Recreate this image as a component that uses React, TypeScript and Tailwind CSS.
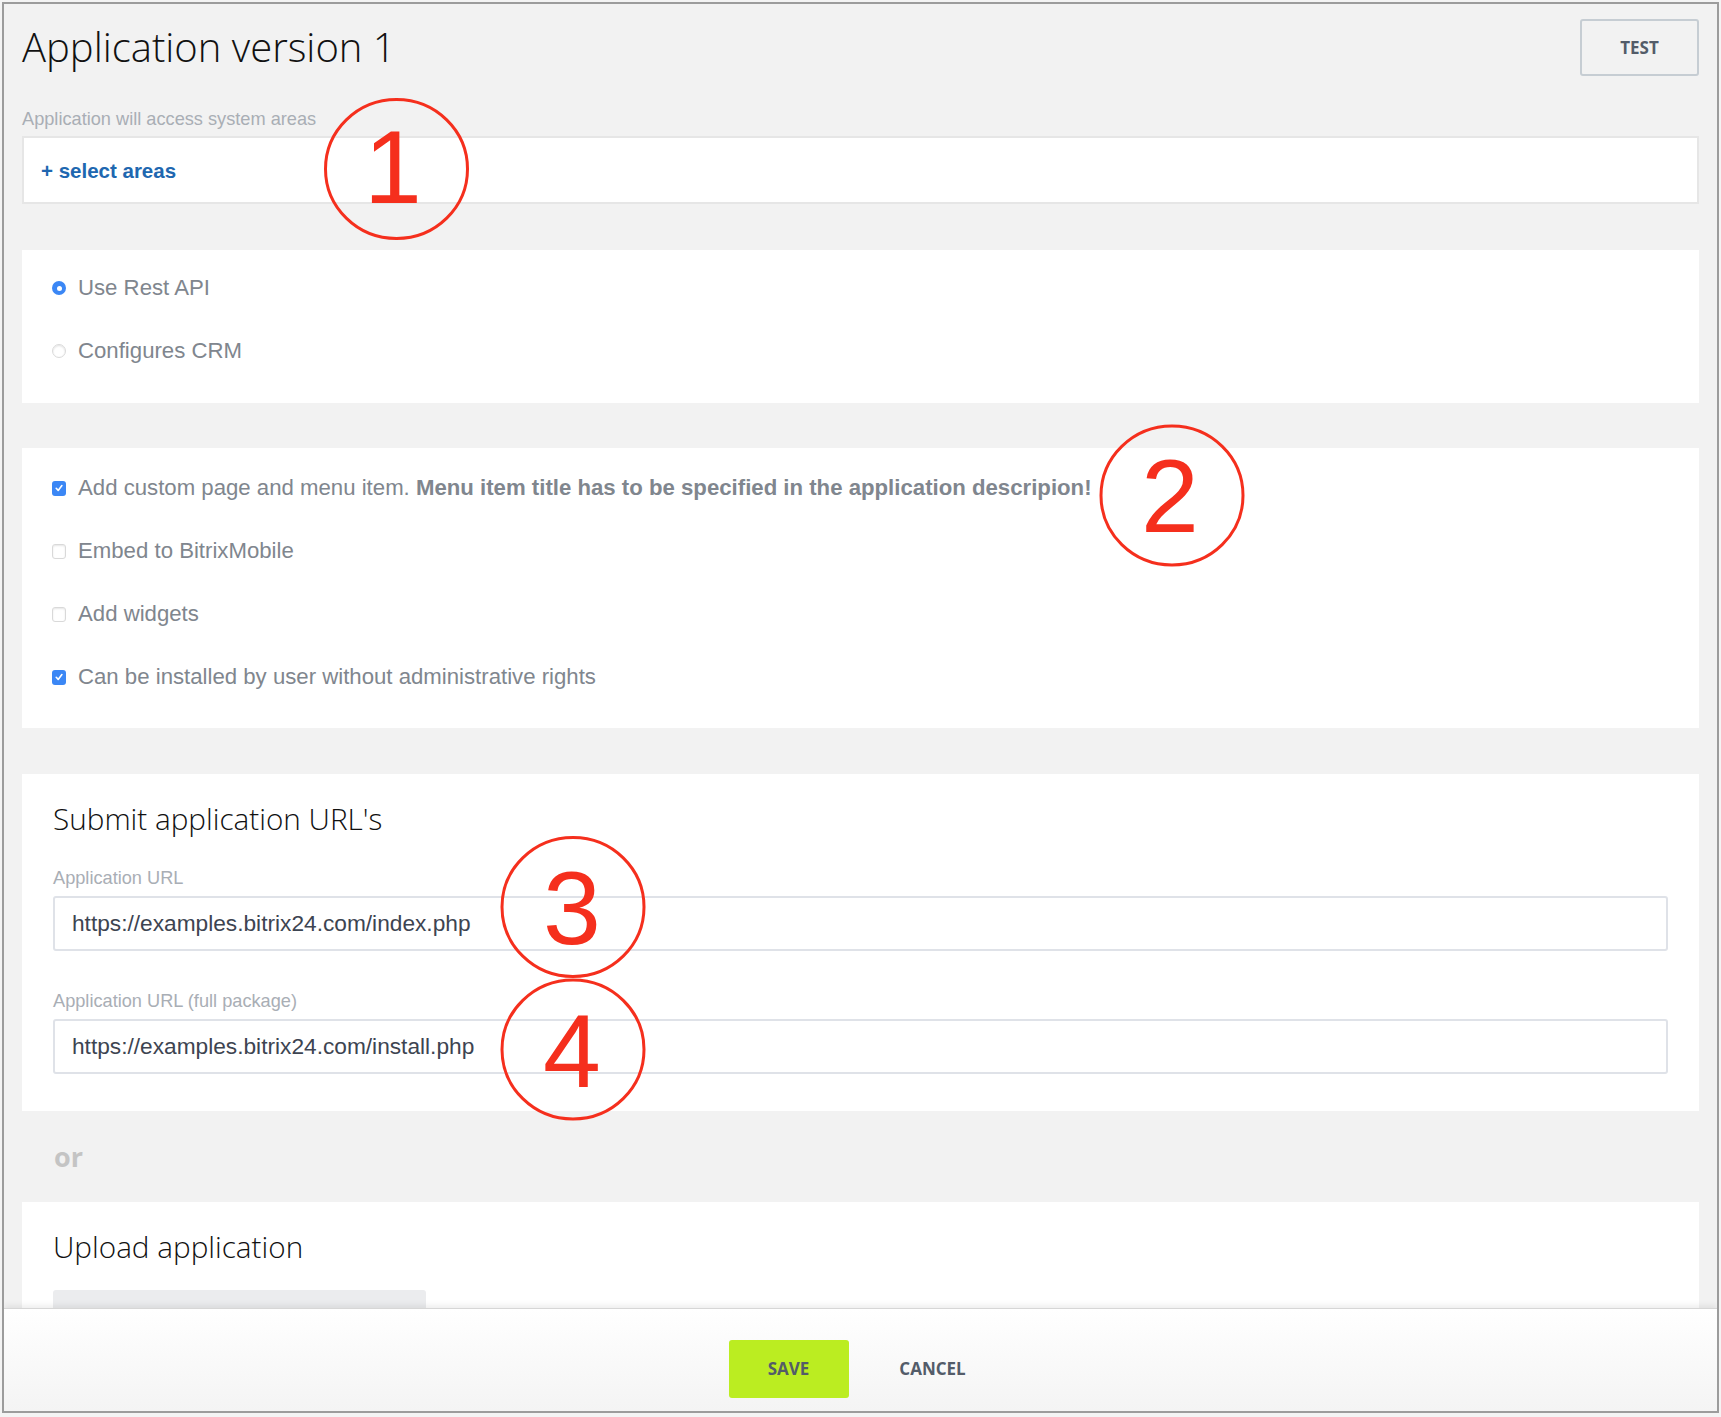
import React from "react";

function Radio({ checked }: { checked?: boolean }) {
  if (checked) {
    return (
      <span className="w-[14px] h-[14px] rounded-full bg-[#3b87f5] flex items-center justify-center shrink-0">
        <span className="w-[5px] h-[5px] rounded-full bg-white" />
      </span>
    );
  }
  return (
    <span className="w-[14px] h-[14px] rounded-full border border-[#dadada] bg-white shadow-[inset_0_1px_2px_rgba(0,0,0,0.12)] shrink-0" />
  );
}

function Check({ checked }: { checked?: boolean }) {
  if (checked) {
    return (
      <span className="w-[14px] h-[15px] rounded-[3px] bg-[#3b87f5] flex items-center justify-center shrink-0">
        <svg width="10" height="10" viewBox="0 0 10 10">
          <path d="M2.2 5.3 L4.2 7.4 L7.9 2.6" stroke="white" strokeWidth="1.6" fill="none" strokeLinecap="round" strokeLinejoin="round" />
        </svg>
      </span>
    );
  }
  return (
    <span className="w-[14px] h-[15px] rounded-[3px] border border-[#d9d9d9] bg-white shadow-[inset_0_1px_2px_rgba(0,0,0,0.1)] shrink-0" />
  );
}

function Row({ children, control }: { children: React.ReactNode; control: React.ReactNode }) {
  return (
    <div className="h-[40px] flex items-center gap-[12px]">
      {control}
      <span className="text-[22.2px] text-[#80868e] font-['Liberation_Sans',Arial,sans-serif] whitespace-nowrap">{children}</span>
    </div>
  );
}

export default function App() {
  const label = "text-[18.2px] leading-[20px] h-[20px] text-[#a9aeb5] font-['Liberation_Sans',Arial,sans-serif] whitespace-nowrap";
  const input =
    "h-[55px] border-2 border-[#dfe2e8] rounded-[3px] bg-white flex items-center pl-[17px] text-[22.7px] text-[#3d4451] font-['Liberation_Sans',Arial,sans-serif]";
  const heading = "h-[40px] text-[29.7px] leading-[40px] font-light text-[#111] font-['Open_Sans',sans-serif] whitespace-nowrap";
  return (
    <div className="w-[1721px] h-[1417px] bg-[#f4f4f4] pt-[2px] px-[2px] pb-[4px] relative">
      <div className="h-full border-2 border-[#9c9c9c] bg-[#f2f2f2] flex flex-col overflow-hidden">
        <div className="flex-1 overflow-hidden px-[18px] min-h-0">
          {/* header */}
          <div className="pt-[15px] flex justify-between items-center">
            <h1 className="text-[40px] font-light text-[#111] font-['Open_Sans',sans-serif] leading-[57px] whitespace-nowrap -mt-[2px]">
              Application version 1
            </h1>
            <button className="w-[119px] h-[57px] border-2 border-[#c6cdd3] rounded-[3px] text-[17px] font-bold text-[#535c69] font-['Open_Sans',sans-serif]">
              TEST
            </button>
          </div>

          <div className={"mt-[33px] " + label}>Application will access system areas</div>
          <div className="mt-[7px] h-[68px] border-2 border-[#e6e6e6] bg-white flex items-center pl-[17px]">
            <span className="text-[20.5px] font-bold text-[#2067b0] font-['Liberation_Sans',Arial,sans-serif] mt-[2px]">+ select areas</span>
          </div>

          {/* radio panel */}
          <div className="mt-[46px] bg-white pt-[18px] pb-[32px] pl-[30px] flex flex-col gap-[23px]">
            <Row control={<Radio checked />}>Use Rest API</Row>
            <Row control={<Radio />}>Configures CRM</Row>
          </div>

          {/* checkbox panel */}
          <div className="mt-[45px] bg-white pt-[20px] pb-[31px] pl-[30px] flex flex-col gap-[23px]">
            <Row control={<Check checked />}>
              Add custom page and menu item.{" "}
              <b className="font-bold">Menu item title has to be specified in the application descripion!</b>
            </Row>
            <Row control={<Check />}>Embed to BitrixMobile</Row>
            <Row control={<Check />}>Add widgets</Row>
            <Row control={<Check checked />}>Can be installed by user without administrative rights</Row>
          </div>

          {/* URL panel */}
          <div className="mt-[46px] bg-white px-[31px] pt-[25px] pb-[37px] flex flex-col">
            <div className={heading}>Submit application URL's</div>
            <div className={"mt-[29px] " + label}>Application URL</div>
            <div className={"mt-[8px] " + input}>https://examples.bitrix24.com/index.php</div>
            <div className={"mt-[40px] " + label}>Application URL (full package)</div>
            <div className={"mt-[8px] " + input}>https://examples.bitrix24.com/install.php</div>
          </div>

          <div className="h-[91px] flex items-center pl-[32px]">
            <span className="text-[27px] font-bold text-[#c4c4c4] font-['Open_Sans',sans-serif] mt-[2px]">or</span>
          </div>

          {/* upload panel */}
          <div className="bg-white px-[31px] pt-[25px] pb-[40px] flex flex-col">
            <div className={heading}>Upload application</div>
            <div className="mt-[23px] w-[373px] h-[40px] bg-[#ebecee] rounded-[3px]" />
          </div>
        </div>

        {/* footer */}
        <div className="h-[103px] shrink-0 border-t border-[#d6d6d6] bg-gradient-to-b from-white to-[#f4f4f4] shadow-[0_-3px_6px_rgba(0,0,0,0.07)] flex justify-center items-start pt-[31px] relative">
          <button className="w-[120px] h-[58px] rounded-[3px] bg-[#bbed21] text-[17px] font-bold text-[#535c69] font-['Open_Sans',sans-serif]">
            SAVE
          </button>
          <button className="ml-[24px] w-[120px] h-[58px] text-[17px] font-bold text-[#535c69] font-['Open_Sans',sans-serif]">
            CANCEL
          </button>
        </div>
      </div>

      {/* annotation overlay */}
      <svg className="absolute left-0 top-0 pointer-events-none" width="1721" height="1417" viewBox="0 0 1721 1417">
        <g fill="none" stroke="#f52f1d" strokeWidth="3">
          <ellipse cx="396.5" cy="169" rx="71" ry="69.5" />
          <ellipse cx="1172" cy="495.5" rx="71" ry="69.5" />
          <ellipse cx="573" cy="907" rx="71" ry="69.5" />
          <ellipse cx="573" cy="1049.5" rx="71" ry="69.5" />
        </g>
        <g fill="#f52f1d" fontFamily="'Liberation Sans', Arial, sans-serif" fontSize="104" textAnchor="middle">
          <text x="393" y="203">1</text>
          <text x="1170" y="532">2</text>
          <text x="572" y="944">3</text>
          <text x="572" y="1087">4</text>
        </g>
      </svg>
    </div>
  );
}
